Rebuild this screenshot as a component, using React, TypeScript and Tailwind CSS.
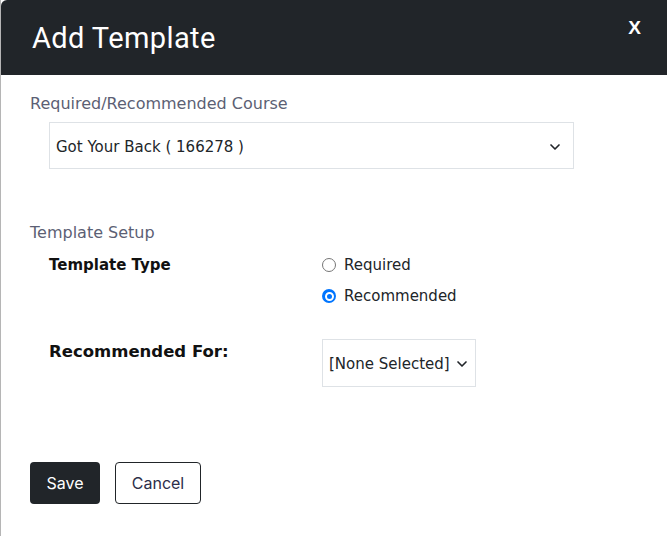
import { ChevronDown } from 'lucide-react'

const body = { fontFamily: '"DejaVu Sans", "Noto Sans", sans-serif' }

function FakeSelect({ value, className }: { value: string; className: string }) {
  return (
    <div className={`flex items-center border border-[#dee2e6] bg-white text-[15px] text-[#212529] ${className}`}>
      <span className="flex-1 whitespace-nowrap pt-[3px]">{value}</span>
      <ChevronDown className="mt-[2px] h-4 w-4 text-[#212529]" strokeWidth={2.5} />
    </div>
  )
}

export default function App() {
  return (
    <div className="h-[536px] w-[667px] overflow-hidden bg-white border-l border-[#b5b5b5]" style={body}>
      <div className="flex h-[75px] items-start justify-between rounded-tl-[6px] bg-[#212529] pl-[31px] pr-[26px]">
        <h1
          className="pt-[19px] text-[29px] leading-[38px] tracking-[0.4px] text-white"
          style={{ fontFamily: 'Roboto, "Noto Sans", sans-serif' }}
        >
          Add Template
        </h1>
        <span
          className="pt-[14px] text-[19px] font-bold text-white"
          style={{ fontFamily: '"Liberation Sans", Arial, sans-serif' }}
        >
          X
        </span>
      </div>

      <div className="px-[29px] pt-[18px]">
        <div className="text-[16px] leading-[22px] text-[#5c5f74]">Required/Recommended Course</div>
        <div className="pl-[19px] pt-[7px] pr-[64px]">
          <FakeSelect value="Got Your Back ( 166278 )" className="h-[47px] pl-[6px] pr-[10px]" />
        </div>

        <div className="pt-[53px] text-[16px] leading-[22px] text-[#5c5f74]">Template Setup</div>
        <div className="flex pl-[19px] pt-[10px]">
          <div className="w-[273px] text-[15px] font-bold leading-[22px] text-[#111]">Template Type</div>
          <div className="flex flex-col gap-[9px]">
            <label className="flex items-center gap-[8px] text-[15px] leading-[22px] text-[#212529]">
              <span className="h-[14px] w-[14px] rounded-full border border-[#767676] bg-white" />
              Required
            </label>
            <label className="flex items-center gap-[8px] text-[15px] leading-[22px] text-[#212529]">
              <span className="flex h-[14px] w-[14px] items-center justify-center rounded-full bg-[#0075ff]">
                <span className="h-[9px] w-[9px] rounded-full border-2 border-white bg-[#0075ff]" />
              </span>
              Recommended
            </label>
          </div>
        </div>

        <div className="flex pl-[19px] pt-[33px]">
          <div className="w-[273px] pt-[1px] text-[16.5px] font-bold leading-[22px] text-[#111]">Recommended For:</div>
          <FakeSelect value="[None Selected]" className="-mt-[1px] h-[48px] w-[154px] gap-[4px] pl-[6px] pr-[5px] text-[#2c3240]" />
        </div>

        <div className="flex gap-[15px] pt-[75px]">
          <button
            className="h-[42px] w-[70px] rounded-[4px] bg-[#212529] text-[16px] text-white"
            style={{ fontFamily: 'Inter, "Liberation Sans", sans-serif' }}
          >
            Save
          </button>
          <button
            className="h-[42px] w-[86px] rounded-[4px] border border-[#212529] bg-white text-[16px] text-[#2c2e4a]"
            style={{ fontFamily: 'Inter, "Liberation Sans", sans-serif' }}
          >
            Cancel
          </button>
        </div>
      </div>
    </div>
  )
}
